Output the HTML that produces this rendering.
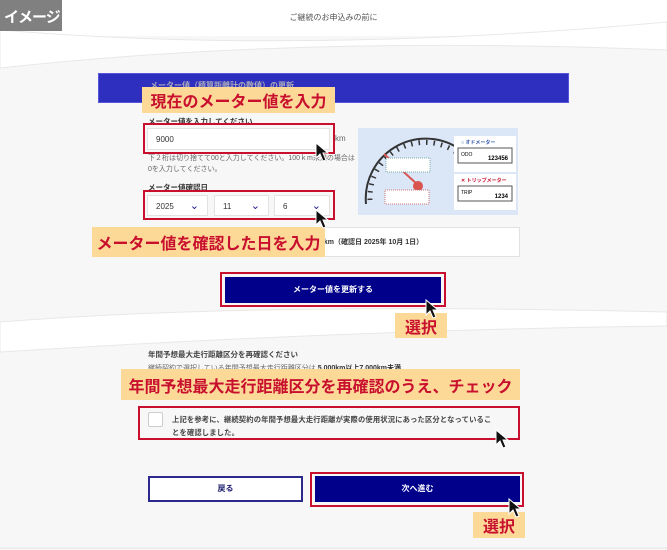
<!DOCTYPE html>
<html><head><meta charset="utf-8"><style>
*{margin:0;padding:0;box-sizing:border-box}
body{width:667px;height:550px;position:relative;overflow:hidden;background:#f7f7f7;font-family:"Liberation Sans","Noto Sans CJK JP",sans-serif;color:#333}
.a{position:absolute}
.or{position:absolute;background:#fdd998;color:#c8102e;font-weight:bold;white-space:nowrap;display:flex;align-items:center;justify-content:center}
.rb{position:absolute;border:2px solid #c8102e}
.sel{position:absolute;background:#fff;border:1px solid #e2e2e2;font-size:8px;padding:9px 0 0 8px;height:28px}
.sel:after{content:"⌄";position:absolute;right:8px;top:3px;color:#1a1a8c;font-size:11px}
.s{font-size:7px;color:#666}
</style></head><body>
<div class="a" style="left:0;top:0;width:667px;height:36px;background:#fff"></div>
<svg class="a" style="left:0;top:0" width="667" height="550">
<path d="M0 30 Q300 55 667 22 L667 50 Q300 35 0 68Z" fill="#fff" stroke="#e8e8e8"/>
<path d="M0 322 Q250 302 667 312 L667 326 Q350 330 0 352Z" fill="#fff" stroke="#e8e8e8"/>
<path d="M0 548 L667 548" stroke="#e6e6e6"/>
</svg>
<div class="a" style="left:0;top:0;width:62px;height:31px;background:#808080;color:#fff;font-size:15px;font-weight:bold;padding:6px 0 0 4px;white-space:nowrap;letter-spacing:-1px">イメージ</div>
<div class="a" style="left:0;top:12px;width:667px;text-align:center;font-size:8px;color:#555">ご継続のお申込みの前に</div>
<div class="a" style="left:98px;top:73px;width:471px;height:30px;background:#2e2ebf;border:1px solid #5555dd"></div>
<div class="a" style="left:150px;top:80px;font-size:8px;color:#aab;font-weight:bold">メーター値（積算距離計の数値）の更新</div>
<div class="or" style="left:142px;top:87px;width:193px;height:26px;font-size:16px">現在のメーター値を入力</div>
<div class="a" style="left:148px;top:116px;font-size:7.5px;font-weight:bold">メーター値を入力してください</div>
<div class="rb" style="left:143px;top:123px;width:192px;height:31px"></div>
<div class="a" style="left:147px;top:128px;width:183px;height:22px;background:#fff;border:1px solid #e2e2e2;font-size:8px;padding:6px 0 0 8px">9000</div>
<div class="a" style="left:335px;top:134px;font-size:8px;color:#666">km</div>
<div class="a s" style="left:148px;top:153px;width:210px;line-height:11px">下２桁は切り捨てて00と入力してください。100ｋm未満の場合は0を入力してください。</div>
<div class="a" style="left:148px;top:182px;font-size:7.5px;font-weight:bold">メーター値確認日</div>
<div class="rb" style="left:143px;top:190px;width:192px;height:30px"></div>
<div class="sel" style="left:147px;top:195px;width:61px;height:21px;padding-top:6px">2025</div>
<div class="sel" style="left:214px;top:195px;width:55px;height:21px;padding-top:6px">11</div>
<div class="sel" style="left:274px;top:195px;width:56px;height:21px;padding-top:6px">6</div>
<div class="a" style="left:147px;top:227px;width:373px;height:30px;background:#fff;border:1px solid #e2e2e2"></div>
<div class="a" style="left:320px;top:237px;font-size:7px;font-weight:bold">0km（確認日 2025年 10月 1日）</div>
<div class="or" style="left:92px;top:227px;width:233px;height:30px;font-size:16px">メーター値を確認した日を入力</div>
<div class="a" style="left:358px;top:128px;width:160px;height:87px;background:#dbe7f7"></div>
<svg class="a" style="left:358px;top:128px" width="160" height="87">
<path d="M12 72 A55 55 0 0 1 98 24" fill="none" stroke="#333" stroke-width="5" stroke-dasharray="1.5 6"/>
<path d="M8 76 A60 60 0 0 1 100 20" fill="none" stroke="#333" stroke-width="2"/>
<line x1="26" y1="26" x2="60" y2="57" stroke="#d9534f" stroke-width="2"/>
<circle cx="60" cy="58" r="5" fill="#d9534f"/>
<rect x="28" y="30" width="44" height="14" fill="#fff" stroke="#7aa" stroke-dasharray="1 1"/>
<rect x="27" y="62" width="44" height="14" fill="#fff" stroke="#c77" stroke-dasharray="1 1"/>
<rect x="96" y="8" width="62" height="36" fill="#fff"/>
<rect x="96" y="46" width="62" height="36" fill="#fff"/>
<rect x="100" y="20" width="54" height="15" fill="#fff" stroke="#555"/>
<rect x="100" y="58" width="54" height="15" fill="#fff" stroke="#555"/>
<text x="103" y="16" font-size="5" fill="#3355aa" font-weight="bold">○ オドメーター</text>
<text x="103" y="28" font-size="5">ODO</text><text x="150" y="32" font-size="6" text-anchor="end" font-weight="bold">123456</text>
<text x="103" y="54" font-size="5" fill="#c8102e" font-weight="bold">✕ トリップメーター</text>
<text x="103" y="66" font-size="5">TRIP</text><text x="150" y="70" font-size="6" text-anchor="end" font-weight="bold">1234</text>
</svg>
<div class="rb" style="left:220px;top:272px;width:226px;height:35px"></div>
<div class="a" style="left:225px;top:277px;width:216px;height:26px;background:#00008b;color:#fff;font-size:8px;font-weight:bold;text-align:center;line-height:26px">メーター値を更新する</div>
<div class="or" style="left:395px;top:313px;width:52px;height:25px;font-size:16px">選択</div>
<div class="a" style="left:148px;top:349px;font-size:7.5px;font-weight:bold;color:#444">年間予想最大走行距離区分を再確認ください</div>
<div class="a s" style="left:148px;top:363px">継続契約で選択している年間予想最大走行距離区分は <b style="color:#333">5,000km以上7,000km未満</b></div>
<div class="or" style="left:121px;top:369px;width:399px;height:31px;font-size:16px">年間予想最大走行距離区分を再確認のうえ、チェック</div>
<div class="rb" style="left:138px;top:406px;width:382px;height:34px"></div>
<div class="a" style="left:148px;top:412px;width:15px;height:15px;background:#fff;border:1px solid #ccc;border-radius:2px"></div>
<div class="a" style="left:172px;top:413px;width:346px;font-size:7.3px;font-weight:bold;color:#444;line-height:13px;letter-spacing:0.15px">上記を参考に、継続契約の年間予想最大走行距離が実際の使用状況にあった区分となっているこ<br>とを確認しました。</div>
<div class="a" style="left:148px;top:476px;width:155px;height:26px;background:#fff;border:2px solid #2a2a8c;color:#1a1a6c;font-size:8px;font-weight:bold;text-align:center;line-height:22px">戻る</div>
<div class="rb" style="left:310px;top:472px;width:214px;height:35px"></div>
<div class="a" style="left:315px;top:476px;width:205px;height:26px;background:#00008b;color:#fff;font-size:8px;font-weight:bold;text-align:center;line-height:26px">次へ進む</div>
<div class="or" style="left:473px;top:512px;width:52px;height:26px;font-size:16px">選択</div>
<svg class="a" style="left:0;top:0" width="667" height="550">
<defs><path id="c" d="M0 0 L0 15 L4 11 L7 18 L10 17 L7 10 L12 10Z" fill="#111" stroke="#fff" stroke-width="1"/></defs>
<use href="#c" x="316" y="143"/><use href="#c" x="316" y="210"/><use href="#c" x="426" y="300"/><use href="#c" x="496" y="430"/><use href="#c" x="509" y="499"/>
</svg>
</body></html>
